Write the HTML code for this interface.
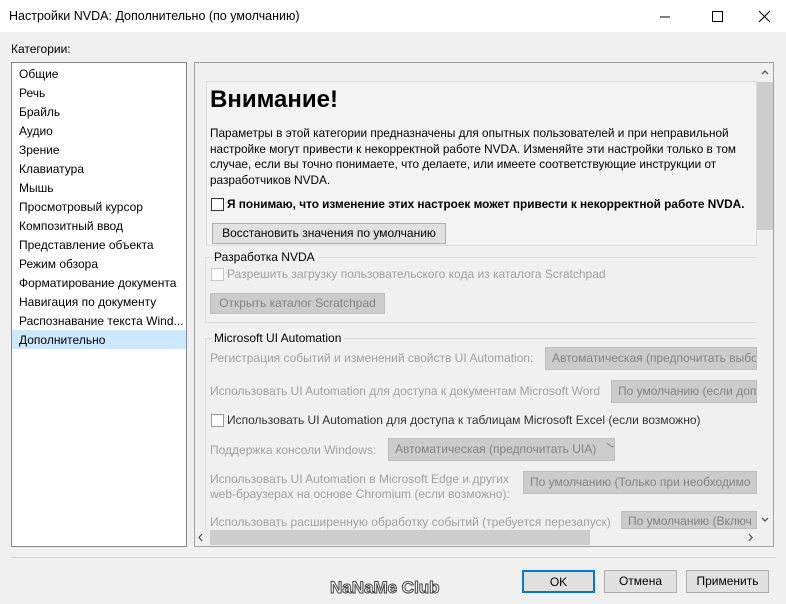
<!DOCTYPE html>
<html><head><meta charset="utf-8"><style>
*{margin:0;padding:0;box-sizing:border-box}
body{width:786px;height:604px;background:#f0f0f0;font-family:"Liberation Sans",sans-serif;font-size:12px;color:#000;position:relative;overflow:hidden}
.a{position:absolute;white-space:nowrap}
.g{color:#a0a0a0}
.btn{position:absolute;background:#e1e1e1;border:1px solid #adadad;text-align:center}
.dis{position:absolute;background:#cccccc;border:1px solid #bfbfbf;color:#838383;padding-left:6px;white-space:nowrap;overflow:hidden}
.cb{position:absolute;width:13px;height:13px;border:1px solid #333;background:#fff}
.cbd{border-color:#c8c8c8}
</style></head><body>
<div class="a" style="left:0;top:0;width:786px;height:32px;background:#fff"></div>
<div class="a" style="left:9px;top:9px;font-size:12.5px">Настройки NVDA: Дополнительно (по умолчанию)</div>
<svg class="a" style="left:660px;top:10px" width="120" height="14"><line x1="0" y1="7" x2="10" y2="7" stroke="#000"/><rect x="52.5" y="1.5" width="10" height="10" fill="none" stroke="#000"/><path d="M99 1L110 12M110 1L99 12" stroke="#000"/></svg>
<div class="a" style="left:11px;top:42px">Категории:</div>
<div class="a" style="left:11px;top:62px;width:176px;height:485px;background:#fff;border:1px solid #828790"></div>
<div class="a" style="left:12px;top:330px;width:174px;height:19px;background:#cce8ff"></div>
<div class="a" style="left:19px;top:65px;line-height:19px">Общие<br>Речь<br>Брайль<br>Аудио<br>Зрение<br>Клавиатура<br>Мышь<br>Просмотровый курсор<br>Композитный ввод<br>Представление объекта<br>Режим обзора<br>Форматирование документа<br>Навигация по документу<br>Распознавание текста Wind...<br>Дополнительно</div>
<div class="a" style="left:194px;top:62px;width:580px;height:485px;border:1px solid #a0a0a0;background:#f0f0f0"></div>
<div class="a" style="left:206px;top:81px;width:551px;height:165px;border:1px solid #dcdcdc;background:#f3f3f3"></div>
<div class="a" style="left:210px;top:86px;font-size:24px;font-weight:bold">Внимание!</div>
<div class="a" style="left:210px;top:126px;line-height:15.5px;font-size:11.8px">Параметры в этой категории предназначены для опытных пользователей и при неправильной<br>настройке могут привести к некорректной работе NVDA. Изменяйте эти настройки только в том<br>случае, если вы точно понимаете, что делаете, или имеете соответствующие инструкции от<br>разработчиков NVDA.</div>
<div class="cb" style="left:211px;top:198px"></div>
<div class="a" style="left:227px;top:197px;font-weight:bold;font-size:11.8px">Я понимаю, что изменение этих настроек может привести к некорректной работе NVDA.</div>
<div class="btn" style="left:212px;top:223px;width:234px;height:21px;line-height:19px">Восстановить значения по умолчанию</div>
<div class="a" style="left:205px;top:257px;width:552px;height:66px;border-top:1px solid #dcdcdc;border-left:1px solid #dcdcdc;border-bottom:1px solid #dcdcdc"></div>
<div class="a" style="left:212px;top:250px;background:#f0f0f0;padding:0 3px 0 2px">Разработка NVDA</div>
<div class="cb cbd" style="left:211px;top:268px"></div>
<div class="a g" style="left:227px;top:267px">Разрешить загрузку пользовательского кода из каталога Scratchpad</div>
<div class="dis" style="left:210px;top:293px;width:175px;height:21px;line-height:19px;text-align:center;padding:0">Открыть каталог Scratchpad</div>
<div class="a" style="left:205px;top:338px;width:552px;height:200px;border-top:1px solid #dcdcdc;border-left:1px solid #dcdcdc"></div>
<div class="a" style="left:212px;top:331px;background:#f0f0f0;padding:0 3px 0 2px">Microsoft UI Automation</div>
<div class="a g" style="left:210px;top:351px">Регистрация событий и изменений свойств UI Automation:</div>
<div class="dis" style="left:545px;top:347px;width:212px;height:23px;line-height:21px">Автоматическая (предпочитать выбор</div>
<div class="a g" style="left:210px;top:384px">Использовать UI Automation для доступа к документам Microsoft Word</div>
<div class="dis" style="left:611px;top:380px;width:146px;height:23px;line-height:21px">По умолчанию (если доп</div>
<div class="cb" style="left:211px;top:414px;border-color:#999"></div>
<div class="a" style="left:227px;top:413px;color:#333">Использовать UI Automation для доступа к таблицам Microsoft Excel (если возможно)</div>
<div class="a g" style="left:210px;top:443px">Поддержка консоли Windows:</div>
<div class="dis" style="left:388px;top:438px;width:227px;height:23px;line-height:21px">Автоматическая (предпочитать UIA) &nbsp;&nbsp;﹀</div>
<div class="a g" style="left:210px;top:472px;line-height:15px">Использовать UI Automation в Microsoft Edge и других<br>web-браузерах на основе Chromium (если возможно):</div>
<div class="dis" style="left:523px;top:471px;width:234px;height:23px;line-height:21px">По умолчанию (Только при необходимо</div>
<div class="a g" style="left:210px;top:515px">Использовать расширенную обработку событий (требуется перезапуск)</div>
<div class="dis" style="left:621px;top:511px;width:136px;height:18px;line-height:19px">По умолчанию (Включ</div>
<div class="a" style="left:757px;top:63px;width:16px;height:466px;background:#f0f0f0"></div>
<div class="a" style="left:757px;top:82px;width:16px;height:148px;background:#cdcdcd"></div>
<svg class="a" style="left:757px;top:63px" width="16" height="466"><path d="M5 11L8 8L11 11" stroke="#555" fill="none" stroke-width="1.3"/><path d="M5 455L8 458L11 455" stroke="#555" fill="none" stroke-width="1.3"/></svg>
<div class="a" style="left:195px;top:529px;width:562px;height:17px;background:#f0f0f0"></div>
<div class="a" style="left:210px;top:530px;width:380px;height:15px;background:#cdcdcd"></div>
<svg class="a" style="left:195px;top:529px" width="562" height="17"><path d="M7 5L4 8.5L7 12" stroke="#555" fill="none" stroke-width="1.3"/><path d="M554 5L557 8.5L554 12" stroke="#555" fill="none" stroke-width="1.3"/></svg>
<div class="a" style="left:11px;top:557px;width:765px;border-top:1px solid #d0d0d0"></div>
<div class="a" style="left:330px;top:578px;font-size:17px;color:#fff;-webkit-text-stroke:1px #444;font-weight:bold">NaNaMe Club</div>
<div class="btn" style="left:522px;top:570px;width:73px;height:23px;line-height:21px;border:2px solid #0078d7">OK</div>
<div class="btn" style="left:604px;top:570px;width:73px;height:23px;line-height:21px">Отмена</div>
<div class="btn" style="left:686px;top:570px;width:83px;height:23px;line-height:21px">Применить</div>
</body></html>
